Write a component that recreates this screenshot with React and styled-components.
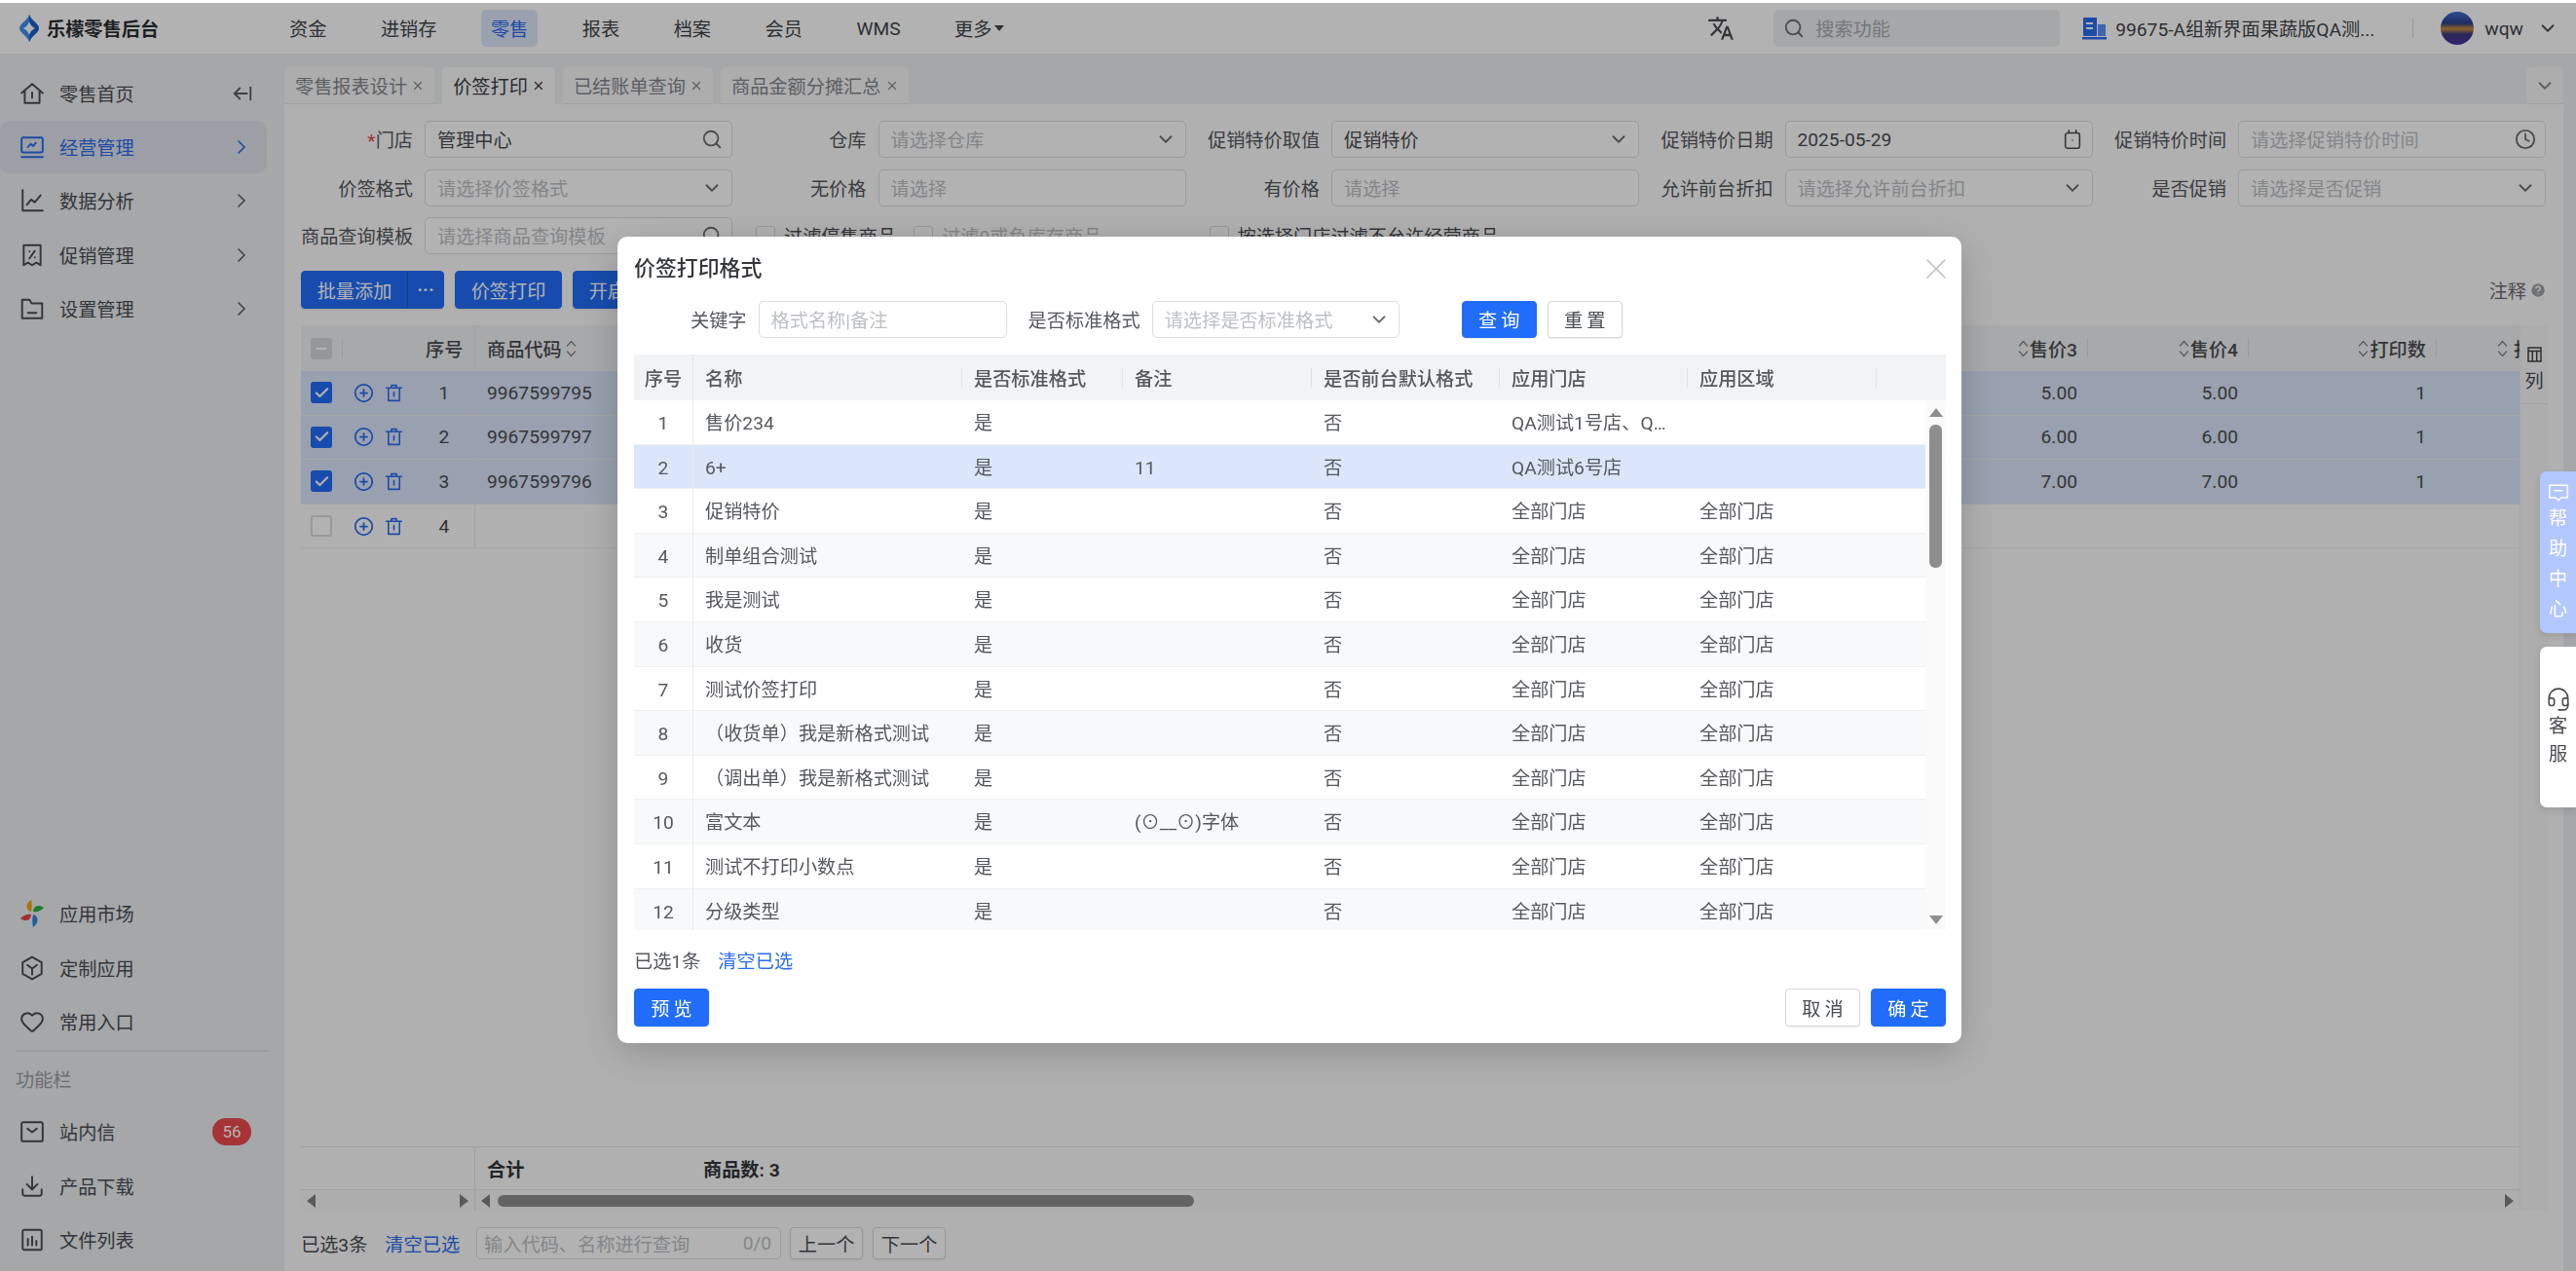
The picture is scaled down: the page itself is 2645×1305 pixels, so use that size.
import React from 'react';
import styled, { createGlobalStyle } from 'styled-components';
import {
  ArrowLeftFromLine, ChevronDown, ChevronRight, CirclePlus, Clock, Check, Download,
  Heart, Headset, Minus, Search, X, HelpCircle,
} from 'lucide-react';
import { MdTranslate } from 'react-icons/md';

const GlobalStyle = createGlobalStyle`
  * { box-sizing: border-box; }
  html, body { margin: 0; height: 100%; overflow: hidden; background: #fff; }
  body {
    font-family: Roboto, "Noto Sans CJK SC", sans-serif;
    font-size: 19.2px;
    color: #4a4d52;
  }
`;

// ---- page shell ----
const Page = styled.div`
  width: 100vw;
  height: 100vh;
  padding-top: 3px;
  display: flex;
  flex-direction: column;
`;
const Header = styled.header`
  height: 54px;
  flex: none;
  display: flex;
  align-items: center;
  padding-right: 18px;
  background: #fff;
  border-bottom: 2px solid #eceef0;
`;
const Brand = styled.div`
  width: 287px;
  padding-left: 20px;
  display: flex;
  align-items: center;
  gap: 8px;
  font-weight: 600;
  color: #2c2f33;
`;
const Nav = styled.nav`
  display: flex;
  align-items: center;
  gap: 35.5px;
`;
const NavItem = styled.div`
  height: 38px;
  padding: 0 10px;
  display: flex;
  align-items: center;
  border-radius: 5px;
  color: ${p => (p.$active ? '#2a6cf0' : '#42454a')};
  background: ${p => (p.$active ? '#dfe8fb' : 'transparent')};
`;
const Caret = styled.span`
  width: 0;
  height: 0;
  margin-left: 3px;
  border-style: solid;
  border-color: #42454a transparent transparent;
  border-width: 6px 5px 0;
`;
const HeaderRight = styled.div`
  margin-left: auto;
  display: flex;
  align-items: center;
`;
const HeaderSearch = styled.div`
  width: 294px;
  height: 38px;
  margin: 0 23px 0 40px;
  padding-left: 10px;
  display: flex;
  align-items: center;
  gap: 11px;
  border-radius: 5px;
  background: #eceff3;
  color: #a8abb0;
`;
const Company = styled.div`
  width: 268px;
  margin-left: 9px;
  white-space: nowrap;
  overflow: hidden;
  color: #42454a;
`;
const HeaderDivider = styled.div`
  width: 1px;
  height: 20px;
  margin: 0 28px 0 37px;
  background: #d5d7da;
`;
const Avatar = styled.div`
  width: 34px;
  height: 34px;
  border-radius: 50%;
  background: linear-gradient(180deg, #3f6fd6 0%, #2c3f88 35%, #c98d3c 52%, #3c3a80 68%, #47329c 100%);
`;
const UserName = styled.span`
  margin: 0 14px 0 11px;
  color: #42454a;
`;
const Body = styled.div`
  flex: 1;
  min-height: 0;
  display: flex;
`;

// ---- sidebar ----
const Sidebar = styled.aside`
  width: 292px;
  flex: none;
  padding: 11.5px 0 5px;
  display: flex;
  flex-direction: column;
  justify-content: space-between;
  background: #eceff3;
`;
const MenuGroup = styled.div`
  display: flex;
  flex-direction: column;
  gap: 1.4px;
`;
const MenuItem = styled.div`
  width: 274px;
  height: 54px;
  flex: none;
  padding: 0 20px;
  display: flex;
  align-items: center;
  gap: 15px;
  border-radius: 10px;
  color: ${p => (p.$active ? '#2a6cf0' : '#4a4d52')};
  background: ${p => (p.$active ? '#e0e4ec' : 'transparent')};
`;
const MenuArrow = styled.span`
  margin-left: auto;
  margin-right: -6px;
  display: flex;
  color: ${p => (p.$active ? '#2a6cf0' : '#5a5d62')};
`;
const MenuDivider = styled.div`
  height: 2px;
  margin: 1px 17px 0 16px;
  background: #dcdfe3;
`;
const MenuCaption = styled.div`
  height: 52px;
  padding-left: 16px;
  display: flex;
  align-items: center;
  color: #9a9da2;
`;
const Badge = styled.span`
  width: 40px;
  height: 28px;
  margin-left: auto;
  margin-right: -4px;
  display: flex;
  align-items: center;
  justify-content: center;
  border-radius: 14px;
  font-size: 17px;
  color: #fff;
  background: #ee4b50;
`;

// ---- main area ----
const Main = styled.main`
  flex: 1;
  min-width: 0;
  padding-right: 13px;
  display: flex;
  flex-direction: column;
  background: #eceff3;
`;
const TabBar = styled.div`
  height: 50px;
  flex: none;
  padding-top: 12px;
  display: flex;
  gap: 8px;
`;
const Tab = styled.div`
  height: 38px;
  padding: 0 10px 0 11px;
  display: flex;
  align-items: center;
  gap: 4px;
  border-radius: 5px 5px 0 0;
  white-space: nowrap;
  color: ${p => (p.$active ? '#3a3d42' : '#85888d')};
  background: ${p => (p.$active ? '#fbfbfb' : '#f8f8f9')};
  border-bottom: ${p => (p.$active ? 'none' : '1px solid #e6e7e9')};
`;
const TabMore = styled(Tab)`
  width: 38px;
  margin-left: auto;
  padding: 0;
  justify-content: center;
`;
const Content = styled.div`
  flex: 1;
  min-height: 0;
  padding: 17px 16px 12px 17px;
  display: flex;
  flex-direction: column;
  background: #fcfcfc;
`;
const FilterGrid = styled.div`
  display: grid;
  grid-template-columns: repeat(5, 443px);
  grid-auto-rows: 38px;
  column-gap: 22.5px;
  row-gap: 11.5px;
`;
const Field = styled.div`
  display: flex;
  align-items: center;
  gap: 12px;
`;
const FieldLabel = styled.label`
  width: 115px;
  flex: none;
  text-align: right;
  white-space: nowrap;
  color: #55585d;
`;
const Required = styled.span`
  color: #e8464a;
`;
const Control = styled.div`
  width: ${p => p.$width || '316px'};
  height: 38px;
  flex: none;
  padding: 0 9px 0 12px;
  display: flex;
  align-items: center;
  justify-content: space-between;
  border: 1px solid #dcdee2;
  border-radius: 5px;
  white-space: nowrap;
  background: #fff;
  color: #4a4d52;
`;
const Placeholder = styled.span`
  color: #bcbfc4;
`;
const CheckRow = styled.div`
  padding-left: 1.5px;
  display: flex;
  align-items: center;
  gap: 18px;
`;
const CheckLabel = styled.label`
  display: flex;
  align-items: center;
  gap: 9px;
  white-space: nowrap;
  color: ${p => (p.$disabled ? '#bcbfc4' : '#4a4d52')};
`;
const SmallBox = styled.span`
  width: 20px;
  height: 20px;
  border: 1px solid #d6d8dc;
  border-radius: 3px;
`;
const Toolbar = styled.div`
  height: 39px;
  margin-top: 17px;
  flex: none;
  display: flex;
  align-items: center;
  gap: 11px;
`;
const Button = styled.button`
  height: ${p => p.$h || '39px'};
  width: ${p => p.$width || 'auto'};
  padding: 0;
  display: flex;
  align-items: center;
  justify-content: center;
  border: 1px solid ${p => (p.$plain ? '#d6d8dc' : '#216cf8')};
  border-radius: 4px;
  font: inherit;
  letter-spacing: ${p => (p.$spaced ? '4px' : '0')};
  text-indent: ${p => (p.$spaced ? '4px' : '0')};
  color: ${p => (p.$plain ? '#4a4d52' : '#fff')};
  background: ${p => (p.$plain ? '#fff' : '#216cf8')};
  box-shadow: 0 1px 2px rgba(0, 0, 0, 0.08);
`;
const SplitButton = styled(Button)`
  width: 147px;
`;
const SplitMain = styled.span`
  width: 109px;
  height: 100%;
  display: flex;
  align-items: center;
  justify-content: center;
  border-right: 1px solid #1b57c9;
`;
const SplitMore = styled.span`
  flex: 1;
  text-align: center;
  font-weight: 700;
`;
const Note = styled.div`
  margin-left: auto;
  padding-right: 1px;
  display: flex;
  align-items: center;
  gap: 3px;
  color: #6a6d72;
`;

// ---- order table behind the dialog ----
const TableWrap = styled.div`
  margin-top: 17px;
  flex: 1;
  min-height: 0;
  display: flex;
`;
const Table = styled.div`
  flex: 1;
  min-width: 0;
  display: flex;
  flex-direction: column;
  border-right: 1px solid #eceef0;
`;
const ROW_COLS = '179px 203px 1fr 165px 165px 193px 85px';
const HeadRow = styled.div`
  height: 47px;
  flex: none;
  display: grid;
  grid-template-columns: ${ROW_COLS};
  font-weight: 500;
  color: #4a4d52;
  background: #f1f3f5;
`;
const BodyRow = styled.div`
  height: 45.6px;
  flex: none;
  display: grid;
  grid-template-columns: ${ROW_COLS};
  background: ${p => (p.$selected ? '#dbe6fb' : 'transparent')};
  border-bottom: 1px solid #edeef0;
`;
const LeadCell = styled.div`
  padding: 0 12px 0 10px;
  display: flex;
  align-items: center;
  border-right: 1px solid #e8eaed;
`;
const Box = styled.span`
  width: 22px;
  height: 22px;
  flex: none;
  display: flex;
  align-items: center;
  justify-content: center;
  border-radius: 3px;
  color: #fff;
  background: ${p => (p.$on ? '#216cf8' : p.$part ? '#d6d8dc' : '#fff')};
  border: ${p => (p.$on || p.$part ? 'none' : '2px solid #dadcdf')};
`;
const HeadSep = styled.span`
  width: 1px;
  height: 20px;
  margin-left: 10px;
  background: #dcdee2;
`;
const RowActions = styled.span`
  margin-left: 22px;
  display: flex;
  gap: 10px;
  color: #2a6cf0;
`;
const SeqNo = styled.span`
  width: 38px;
  margin-left: auto;
  white-space: nowrap;
  text-align: center;
`;
const CodeCell = styled.div`
  padding-left: 12px;
  display: flex;
  align-items: center;
  gap: 4px;
  white-space: nowrap;
`;
const NumCell = styled.div`
  padding-right: 11px;
  display: flex;
  align-items: center;
  justify-content: flex-end;
  gap: 1px;
  position: relative;
  white-space: nowrap;
  &::after {
    content: '';
    display: ${p => (p.$head ? 'block' : 'none')};
    position: absolute;
    right: 0;
    top: 13px;
    width: 1px;
    height: 20px;
    background: #dcdee2;
  }
`;
const ClipCell = styled.div`
  padding-left: 62px;
  display: flex;
  align-items: center;
  gap: 6px;
  overflow: hidden;
  white-space: nowrap;
  & > svg { flex: none; }
`;
const TableSpacer = styled.div`
  flex: 1;
`;
const TotalRow = styled.div`
  height: 45px;
  flex: none;
  display: grid;
  grid-template-columns: 179px 222px 1fr;
  font-weight: 700;
  color: #33363a;
  border-top: 1px solid #e4e6e8;
  border-bottom: 1px solid #e4e6e8;
`;
const TotalCell = styled.div`
  padding-left: 12px;
  display: flex;
  align-items: center;
  &:first-child { border-right: 1px solid #e4e6e8; }
`;
const ScrollRow = styled.div`
  height: 21px;
  flex: none;
  display: grid;
  grid-template-columns: 179px 1fr;
`;
const ScrollPart = styled.div`
  padding: 0 6px;
  display: flex;
  align-items: center;
  justify-content: space-between;
  background: #fafafa;
  &:first-child { border-right: 1px solid #e4e6e8; }
`;
const Arrow = styled.span`
  width: 0;
  height: 0;
  border-style: solid;
  border-color: transparent;
  border-width: 7px 0 7px 9px;
  border-left-color: #808285;
  transform: ${p => (p.$left ? 'rotate(180deg)' : 'none')};
`;
const VArrow = styled.span`
  width: 0;
  height: 0;
  border-style: solid;
  border-color: transparent;
  border-width: 0 7px 9px 7px;
  border-bottom-color: #8e8e8e;
  transform: ${p => (p.$down ? 'rotate(180deg)' : 'none')};
`;
const ScrollThumb = styled.span`
  width: 715px;
  height: 12px;
  margin: 0 auto 0 8px;
  border-radius: 6px;
  background: #8f8f8f;
`;
const SideColumn = styled.div`
  width: 28px;
  flex: none;
  background: #f8f8f9;
`;
const SideHead = styled.div`
  height: 81px;
  padding-top: 22px;
  display: flex;
  flex-direction: column;
  align-items: center;
  gap: 4px;
  border-bottom: 1px solid #e4e6e8;
  color: #4a4d52;
`;
const BottomBar = styled.div`
  height: 33px;
  margin-top: 17px;
  flex: none;
  display: flex;
  align-items: center;
`;
const Link = styled.a`
  color: #2a6cf0;
`;
const BottomLink = styled(Link)`
  margin-left: 18px;
`;
const SmallInput = styled(Control)`
  width: 313px;
  height: 33px;
  margin: 0 9px 0 17px;
  padding: 0 9px 0 7px;
`;
const PagerButton = styled(Button)`
  width: 75px;
  height: 33px;
  margin-right: 10px;
`;

// ---- dialog ----
const Overlay = styled.div`
  position: fixed;
  inset: 3px 0 0 0;
  z-index: 10;
  background: rgba(0, 0, 0, 0.3);
`;
const Dialog = styled.section`
  position: fixed;
  left: 634px;
  top: 243px;
  z-index: 11;
  width: 1380px;
  height: 828px;
  padding: 0 16px 16px 17px;
  display: flex;
  flex-direction: column;
  border-radius: 10px;
  background: #fff;
  box-shadow: 0 10px 40px rgba(0, 0, 0, 0.2);
`;
const DialogHead = styled.div`
  height: 66px;
  flex: none;
  display: flex;
  align-items: center;
  justify-content: space-between;
  color: #bbbdc0;
  & > svg { margin-right: -8px; }
`;
const DialogTitle = styled.h2`
  margin: 0 0 6px;
  font-size: 21.9px;
  font-weight: 500;
  color: #33363a;
`;
const DialogFilter = styled.div`
  height: 38px;
  flex: none;
  padding-left: 58px;
  display: flex;
  align-items: center;
`;
const DialogField = styled.div`
  margin-right: 22px;
  display: flex;
  align-items: center;
  gap: 12px;
  color: #55585d;
`;
const DialogActions = styled.div`
  margin-left: 42px;
  display: flex;
  gap: 11px;
`;
const DIALOG_COLS = '61px 276px 165px 194px 193px 193px 194px 1fr';
const DialogHeadRow = styled.div`
  height: 47px;
  margin-top: 17px;
  flex: none;
  display: grid;
  grid-template-columns: ${DIALOG_COLS};
  font-weight: 500;
  color: #55585d;
  background: #f1f3f5;
`;
const DialogHeadCell = styled.div`
  padding-left: 12px;
  display: flex;
  align-items: center;
  white-space: nowrap;
  position: relative;
  &::after {
    content: '';
    position: absolute;
    right: 0;
    top: 13px;
    width: 1px;
    height: 21px;
    background: #e0e2e5;
  }
`;
const DialogSeqHead = styled(DialogHeadCell)`
  padding-left: 0;
  justify-content: center;
  border-right: 1px solid #e4e6e8;
  &::after { display: none; }
`;
const DialogBlank = styled.div``;
const DialogBody = styled.div`
  height: 544px;
  flex: none;
  display: flex;
  overflow: hidden;
`;
const DialogRows = styled.div`
  flex: 1;
  min-width: 0;
`;
const DialogRow = styled.div`
  height: 45.6px;
  display: grid;
  grid-template-columns: ${DIALOG_COLS};
  align-items: stretch;
  color: #55585d;
  background: ${p => (p.$selected ? '#dbe6fb' : p.$even ? '#f8f9fa' : '#fff')};
  border-bottom: 1px solid #eef0f1;
`;
const DialogCell = styled.div`
  padding: 0 15px 0 12px;
  line-height: 47px;
  white-space: nowrap;
  overflow: hidden;
  text-overflow: ellipsis;
`;
const DialogSeq = styled(DialogCell)`
  padding: 0;
  text-align: center;
  border-right: 1px solid #e8eaed;
`;
const DialogScroll = styled.div`
  width: 21px;
  flex: none;
  padding: 8px 0 6px;
  display: flex;
  flex-direction: column;
  align-items: center;
  background: #fafafa;
`;
const DialogThumb = styled.div`
  width: 13px;
  height: 147px;
  margin-top: 8px;
  margin-bottom: auto;
  border-radius: 6px;
  background: #8e8e8e;
`;
const PickedRow = styled.div`
  height: 60px;
  padding-top: 2px;
  flex: none;
  display: flex;
  align-items: center;
  gap: 18px;
  color: #55585d;
`;
const DialogFooter = styled.div`
  display: flex;
  justify-content: space-between;
`;
const FooterRight = styled.div`
  display: flex;
  gap: 11px;
`;

// ---- floating help tabs ----
const HelpTab = styled.aside`
  position: fixed;
  right: 0;
  top: ${p => p.$top}px;
  z-index: 12;
  width: 37px;
  height: ${p => p.$height}px;
  display: flex;
  flex-direction: column;
  align-items: center;
  justify-content: ${p => (p.$center ? 'center' : 'flex-start')};
  gap: ${p => (p.$center ? '0' : '2px')};
  padding-top: ${p => (p.$center ? '0' : '13px')};
  border-radius: 7px 0 0 7px;
  color: ${p => p.$color};
  background: ${p => p.$bg};
  box-shadow: 0 3px 10px rgba(0, 0, 0, 0.12);
`;
const Vertical = styled.span`
  width: 20px;
  text-align: center;
  line-height: 29px;
`;

// ---- drawn icons ----
const Svg = ({ size = 26, children, ...rest }) => (
  <svg width={size} height={size} viewBox="0 0 24 24" fill="none" stroke="currentColor" strokeWidth="1.8" strokeLinecap="round" strokeLinejoin="round" {...rest}>
    {children}
  </svg>
);
const Logo = () => (
  <svg width="20" height="28" viewBox="0 0 20 28">
    <path d="M10 0 Q11 3 14 6 Q20 11 20 14 Q20 17 14 22 Q11 25 10 28 Q9 25 6 22 Q0 17 0 14 Q0 11 6 6 Q9 3 10 0Z" fill="#3b8ff0" />
    <path d="M10 0 Q11 3 14 6 Q20 11 20 14 Q20 17 14 22 Q11 25 10 28Z" fill="#1d5fc4" />
    <path d="M10 7 Q11 11.5 16 14 Q11 16.5 10 21 Q9 16.5 4 14 Q9 11.5 10 7Z" fill="#fff" />
  </svg>
);
const HomeIcon = () => <Svg><path d="M2 11.5 12 3l10 8.5M5 9.5V21h14V9.5M12 11v5" /></Svg>;
const MonitorIcon = () => <Svg><rect x="2" y="3" width="20" height="14" rx="1.5" /><path d="M2 21.5h20M8 12l2.5-3 2.5 2 2.5-3" /></Svg>;
const ChartIcon = () => <Svg><path d="M3 2v19.5h19M7 16l4-5 3.5 2.5L20 7" /></Svg>;
const CouponIcon = () => <Svg><path d="M4 2.5h16v19l-4-2.5-4 2.5-4-2.5-4 2.5z" /><path d="M14.5 8l-5 7M9.5 8.5h.01M14.5 14h.01" /></Svg>;
const FolderIcon = () => <Svg><path d="M2.5 3.5h7l2 3.5h10v14h-19zM8 16h8" /></Svg>;
const PinwheelIcon = () => (
  <svg width="26" height="30" viewBox="0 0 26 30">
    <path d="M12 13 C6 12 6 4 12 1 C13 5 13 9 12 13Z" fill="#f0a810" />
    <path d="M14 13 C14 7 20 5 25 9 C22 12 18 14 14 13Z" fill="#2fb344" />
    <path d="M12 16 C12 22 6 24 1 20 C4 17 8 15 12 16Z" fill="#e8424a" />
    <path d="M14 16 C20 17 20 25 14 29 C13 24 13 20 14 16Z" fill="#2f86e6" />
  </svg>
);
const CubeIcon = () => <Svg><path d="M12 1.5 21 6.5v11l-9 5-9-5v-11zM7.5 9l4.5 3.5L16.5 9M12 12.5V18" /></Svg>;
const InboxIcon = () => <Svg><rect x="2" y="3" width="20" height="18" rx="1.5" /><path d="M7.5 9l4.5 3.5L16.5 9" /></Svg>;
const ReportIcon = () => <Svg><rect x="3" y="2.5" width="18" height="19" rx="1.5" /><path d="M8 11v6M12 9v8M16 13v4" /></Svg>;
const TrashIcon = () => <Svg size={21}><path d="M3 6h18M9 6V3h6v3M5.5 6v15h13V6M12 11v5" /></Svg>;
const SortIcon = () => (
  <svg width="11" height="22" viewBox="0 0 11 22" fill="none" stroke="#85888d" strokeWidth="1.4" strokeLinecap="round" strokeLinejoin="round">
    <path d="M1.5 8 5.5 3.5 9.5 8M1.5 14 5.5 18.5 9.5 14" />
  </svg>
);
const CalendarIcon = () => <Svg size={22} strokeWidth="1.7"><rect x="4" y="5" width="16" height="17" rx="2.5" /><path d="M8 2v3M16 2v3M12 13h.01" /></Svg>;
const CompanyIcon = () => (
  <svg width="25" height="24" viewBox="0 0 25 24">
    <rect x="1" y="1" width="14" height="19" rx="1" fill="#2a6cf0" />
    <rect x="16" y="8" width="8" height="12" fill="#5b93f5" />
    <rect x="0" y="21" width="25" height="2.5" fill="#2a6cf0" />
    <rect x="4" y="6" width="7" height="2" fill="#fff" />
    <rect x="4" y="11" width="7" height="2" fill="#fff" />
  </svg>
);
const ColumnsIcon = () => (
  <svg width="15" height="16" viewBox="0 0 15 16" fill="none" stroke="#3f4246" strokeWidth="1.5">
    <rect x="1" y="1" width="13" height="14" />
    <path d="M1 4.5h13M5.3 4.5V15M9.7 4.5V15" />
  </svg>
);
const HelpIcon = () => (
  <svg width="22" height="19" viewBox="0 0 24 20" fill="none" stroke="#fff" strokeWidth="1.6" strokeLinejoin="round">
    <path d="M2 1h20v14h-7l-3 3-3-3H2zM7 7h10" />
  </svg>
);

// ---- data ----
const navItems = ['资金', '进销存', '零售', '报表', '档案', '会员', 'WMS'];
const tabs = ['零售报表设计', '价签打印', '已结账单查询', '商品金额分摊汇总'];
const sideTop = [
  { label: '经营管理', icon: <MonitorIcon />, active: true },
  { label: '数据分析', icon: <ChartIcon /> },
  { label: '促销管理', icon: <CouponIcon /> },
  { label: '设置管理', icon: <FolderIcon /> },
];
const filters = [
  { label: '门店', required: true, value: '管理中心', icon: 'search' },
  { label: '仓库', hint: '请选择仓库', icon: 'down' },
  { label: '促销特价取值', value: '促销特价', icon: 'down' },
  { label: '促销特价日期', value: '2025-05-29', icon: 'date' },
  { label: '促销特价时间', hint: '请选择促销特价时间', icon: 'time' },
  { label: '价签格式', hint: '请选择价签格式', icon: 'down' },
  { label: '无价格', hint: '请选择' },
  { label: '有价格', hint: '请选择' },
  { label: '允许前台折扣', hint: '请选择允许前台折扣', icon: 'down' },
  { label: '是否促销', hint: '请选择是否促销', icon: 'down' },
  { label: '商品查询模板', hint: '请选择商品查询模板', icon: 'search' },
];
const orderRows = [
  { no: 1, code: '9967599795', p3: '5.00', p4: '5.00', qty: 1, on: true },
  { no: 2, code: '9967599797', p3: '6.00', p4: '6.00', qty: 1, on: true },
  { no: 3, code: '9967599796', p3: '7.00', p4: '7.00', qty: 1, on: true },
  { no: 4 },
];
const formats = [
  ['售价234', '', 'QA测试1号店、QA测试2号店', ''],
  ['6+', '11', 'QA测试6号店', ''],
  ['促销特价'],
  ['制单组合测试'],
  ['我是测试'],
  ['收货'],
  ['测试价签打印'],
  ['（收货单）我是新格式测试'],
  ['（调出单）我是新格式测试'],
  ['富文本', '(⊙__⊙)字体'],
  ['测试不打印小数点'],
  ['分级类型'],
];

const fieldIcon = kind => {
  if (kind === 'search') return <Search size={22} color="#6a6d72" />;
  if (kind === 'down') return <ChevronDown size={22} color="#6a6d72" />;
  if (kind === 'date') return <CalendarIcon />;
  if (kind === 'time') return <Clock size={22} color="#6a6d72" />;
  return null;
};

function FilterField({ item }) {
  return (
    <Field>
      <FieldLabel>
        {item.required && <Required>*</Required>}
        {item.label}
      </FieldLabel>
      <Control>
        {item.value ? <span>{item.value}</span> : <Placeholder>{item.hint}</Placeholder>}
        {fieldIcon(item.icon)}
      </Control>
    </Field>
  );
}

function PriceDialog() {
  return (
    <Dialog>
      <DialogHead>
        <DialogTitle>价签打印格式</DialogTitle>
        <X size={36} strokeWidth={1} />
      </DialogHead>
      <DialogFilter>
        <DialogField>
          关键字
          <Control $width="255px"><Placeholder>格式名称|备注</Placeholder></Control>
        </DialogField>
        <DialogField>
          是否标准格式
          <Control $width="254px">
            <Placeholder>请选择是否标准格式</Placeholder>
            <ChevronDown size={22} color="#6a6d72" />
          </Control>
        </DialogField>
        <DialogActions>
          <Button $width="77px" $h="38px" $spaced>查询</Button>
          <Button $width="77px" $h="38px" $spaced $plain>重置</Button>
        </DialogActions>
      </DialogFilter>
      <DialogHeadRow>
        <DialogSeqHead>序号</DialogSeqHead>
        <DialogHeadCell>名称</DialogHeadCell>
        <DialogHeadCell>是否标准格式</DialogHeadCell>
        <DialogHeadCell>备注</DialogHeadCell>
        <DialogHeadCell>是否前台默认格式</DialogHeadCell>
        <DialogHeadCell>应用门店</DialogHeadCell>
        <DialogHeadCell>应用区域</DialogHeadCell>
        <DialogBlank />
      </DialogHeadRow>
      <DialogBody>
        <DialogRows>
          {formats.map((row, i) => {
            const hasStore = row.length > 2;
            const note = row[1] || '';
            return (
              <DialogRow key={row[0]} $selected={i === 1} $even={i % 2 === 1}>
                <DialogSeq>{i + 1}</DialogSeq>
                <DialogCell>{row[0]}</DialogCell>
                <DialogCell>是</DialogCell>
                <DialogCell>{note}</DialogCell>
                <DialogCell>否</DialogCell>
                <DialogCell>{hasStore ? row[2] : '全部门店'}</DialogCell>
                <DialogCell>{hasStore ? row[3] : '全部门店'}</DialogCell>
              </DialogRow>
            );
          })}
        </DialogRows>
        <DialogScroll>
          <VArrow />
          <DialogThumb />
          <VArrow $down />
        </DialogScroll>
      </DialogBody>
      <PickedRow>
        已选1条
        <Link>清空已选</Link>
      </PickedRow>
      <DialogFooter>
        <Button $width="77px" $spaced>预览</Button>
        <FooterRight>
          <Button $width="77px" $spaced $plain>取消</Button>
          <Button $width="77px" $spaced>确定</Button>
        </FooterRight>
      </DialogFooter>
    </Dialog>
  );
}

export default function App() {
  return (
    <>
      <GlobalStyle />
      <Page>
        <Header>
          <Brand><Logo />乐檬零售后台</Brand>
          <Nav>
            {navItems.map(n => <NavItem key={n} $active={n === '零售'}>{n}</NavItem>)}
            <NavItem>更多<Caret /></NavItem>
          </Nav>
          <HeaderRight>
            <MdTranslate size={28} color="#4a4d52" />
            <HeaderSearch><Search size={22} color="#6a6d72" />搜索功能</HeaderSearch>
            <CompanyIcon />
            <Company>99675-A组新界面果蔬版QA测...</Company>
            <HeaderDivider />
            <Avatar />
            <UserName>wqw</UserName>
            <ChevronDown size={22} color="#4a4d52" />
          </HeaderRight>
        </Header>
        <Body>
          <Sidebar>
            <MenuGroup>
              <MenuItem>
                <HomeIcon />零售首页
                <MenuArrow><ArrowLeftFromLine size={22} /></MenuArrow>
              </MenuItem>
              {sideTop.map(s => (
                <MenuItem key={s.label} $active={s.active}>
                  {s.icon}{s.label}
                  <MenuArrow $active={s.active}><ChevronRight size={24} strokeWidth={1.6} /></MenuArrow>
                </MenuItem>
              ))}
            </MenuGroup>
            <MenuGroup>
              <MenuItem><PinwheelIcon />应用市场</MenuItem>
              <MenuItem><CubeIcon />定制应用</MenuItem>
              <MenuItem><Heart size={26} strokeWidth={1.8} />常用入口</MenuItem>
              <MenuDivider />
              <MenuCaption>功能栏</MenuCaption>
              <MenuItem><InboxIcon />站内信<Badge>56</Badge></MenuItem>
              <MenuItem><Download size={26} strokeWidth={1.8} />产品下载</MenuItem>
              <MenuItem><ReportIcon />文件列表</MenuItem>
            </MenuGroup>
          </Sidebar>
          <Main>
            <TabBar>
              {tabs.map((t, i) => (
                <Tab key={t} $active={i === 1}>{t}<X size={14} strokeWidth={2.2} /></Tab>
              ))}
              <TabMore><ChevronDown size={22} color="#85888d" /></TabMore>
            </TabBar>
            <Content>
              <FilterGrid>
                {filters.map(f => <FilterField key={f.label} item={f} />)}
                <CheckRow>
                  <CheckLabel><SmallBox />过滤停售商品</CheckLabel>
                  <CheckLabel $disabled><SmallBox />过滤0或负库存商品</CheckLabel>
                </CheckRow>
                <CheckRow>
                  <CheckLabel><SmallBox />按选择门店过滤不允许经营商品</CheckLabel>
                </CheckRow>
              </FilterGrid>
              <Toolbar>
                <SplitButton>
                  <SplitMain>批量添加</SplitMain>
                  <SplitMore>···</SplitMore>
                </SplitButton>
                <Button $width="110px">价签打印</Button>
                <Button $width="110px">开启打印</Button>
                <Note>注释<HelpCircle size={18} fill="#9fa2a8" color="#fff" /></Note>
              </Toolbar>
              <TableWrap>
                <Table>
                  <HeadRow>
                    <LeadCell>
                      <Box $part><Minus size={16} strokeWidth={3} /></Box>
                      <HeadSep />
                      <SeqNo>序号</SeqNo>
                    </LeadCell>
                    <CodeCell>商品代码<SortIcon /></CodeCell>
                    <div />
                    <NumCell $head><SortIcon />售价3</NumCell>
                    <NumCell $head><SortIcon />售价4</NumCell>
                    <NumCell $head><SortIcon />打印数</NumCell>
                    <ClipCell><SortIcon />打印</ClipCell>
                  </HeadRow>
                  {orderRows.map(r => (
                    <BodyRow key={r.no} $selected={r.on}>
                      <LeadCell>
                        <Box $on={r.on}>{r.on && <Check size={17} strokeWidth={3} />}</Box>
                        <RowActions>
                          <CirclePlus size={21} />
                          <TrashIcon />
                        </RowActions>
                        <SeqNo>{r.no}</SeqNo>
                      </LeadCell>
                      <CodeCell>{r.code}</CodeCell>
                      <div />
                      <NumCell>{r.p3}</NumCell>
                      <NumCell>{r.p4}</NumCell>
                      <NumCell>{r.qty}</NumCell>
                      <div />
                    </BodyRow>
                  ))}
                  <TableSpacer />
                  <TotalRow>
                    <TotalCell />
                    <TotalCell>合计</TotalCell>
                    <TotalCell>商品数: 3</TotalCell>
                  </TotalRow>
                  <ScrollRow>
                    <ScrollPart><Arrow $left /><Arrow /></ScrollPart>
                    <ScrollPart><Arrow $left /><ScrollThumb /><Arrow /></ScrollPart>
                  </ScrollRow>
                </Table>
                <SideColumn>
                  <SideHead><ColumnsIcon />列</SideHead>
                </SideColumn>
              </TableWrap>
              <BottomBar>
                已选3条
                <BottomLink>清空已选</BottomLink>
                <SmallInput>
                  <Placeholder>输入代码、名称进行查询</Placeholder>
                  <Placeholder>0/0</Placeholder>
                </SmallInput>
                <PagerButton $plain>上一个</PagerButton>
                <PagerButton $plain>下一个</PagerButton>
              </BottomBar>
            </Content>
          </Main>
        </Body>
      </Page>
      <Overlay />
      <PriceDialog />
      <HelpTab $top={484} $height={166} $bg="#b3c7ff" $color="#fff">
        <HelpIcon />
        <Vertical>帮</Vertical>
        <Vertical>助</Vertical>
        <Vertical>中</Vertical>
        <Vertical>心</Vertical>
      </HelpTab>
      <HelpTab $top={664} $height={165} $bg="#fff" $color="#4a4d52" $center>
        <Headset size={26} strokeWidth={1.5} />
        <Vertical>客</Vertical>
        <Vertical>服</Vertical>
      </HelpTab>
    </>
  );
}
